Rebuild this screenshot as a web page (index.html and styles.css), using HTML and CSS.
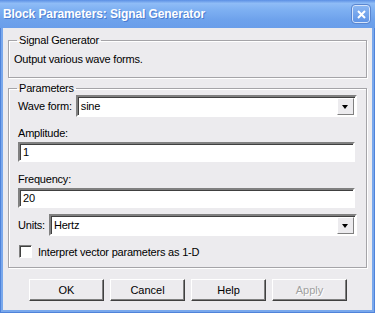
FILE: index.html
```html
<!DOCTYPE html>
<html lang="en">
<head>
    <meta charset="UTF-8">
    <title>Block Parameters: Signal Generator</title>
    <link rel="stylesheet" href="styles.css">
</head>
<body>

<div class="window">
    <!-- title bar -->
    <div class="titlebar">
        <span class="title">Block Parameters: Signal Generator</span>
        <span class="close-btn">
            <svg width="9" height="9" viewBox="0 0 9 9">
                <path d="M1 1 L8 8 M8 1 L1 8" stroke="#fff" stroke-width="2"/>
            </svg>
        </span>
    </div>

    <div class="client">
        <fieldset class="group desc">
            <legend>Signal Generator</legend>
            <p>Output various wave forms.</p>
        </fieldset>

        <fieldset class="group params">
            <legend>Parameters</legend>

            <div class="row first">
                <label>Wave form:</label>
                <div class="select">
                    <span class="value">sine</span>
                    <span class="arrow"></span>
                </div>
            </div>

            <label class="field-label amp">Amplitude:</label>
            <div class="textbox">1</div>

            <label class="field-label freq">Frequency:</label>
            <div class="textbox">20</div>

            <div class="row units">
                <label>Units:</label>
                <div class="select">
                    <span class="value">Hertz</span>
                    <span class="arrow"></span>
                </div>
            </div>

            <div class="check-row">
                <span class="checkbox"></span>
                <span>Interpret vector parameters as 1-D</span>
            </div>
        </fieldset>

        <div class="buttons">
            <button>OK</button>
            <button>Cancel</button>
            <button>Help</button>
            <button class="disabled">Apply</button>
        </div>
    </div>
</div>

</body>
</html>
```

FILE: styles.css
```css
body {
    margin: 0;
    padding: 0;
    font-family: 'Liberation Sans', Arial, sans-serif;
    font-size: 11px;
    letter-spacing: -0.2px;
    color: #000;
    background: #fff;
}

.window {
    width: 375px;
    height: 313px;
    box-sizing: border-box;
    display: flex;
    flex-direction: column;
    background: #79a8ec;
    border: 1px solid #4f83da;
    border-top: none;
}

.titlebar {
    height: 28px;
    flex-shrink: 0;
    display: flex;
    align-items: center;
    justify-content: space-between;
    padding: 0 5px 0 3px;
    background: linear-gradient(to bottom, #5b8fe4 0%, #8fbcf6 12%, #7eb0f2 35%, #6ea2ec 70%, #6a9eea 100%);
    margin: 0 -1px;
}

.title {
    color: #fff;
    font-family: 'Liberation Sans', Arial, sans-serif;
    font-weight: bold;
    font-size: 12px;
    letter-spacing: -0.1px;
    text-shadow: 1px 1px 0 #4a7cd0;
}

.close-btn {
    width: 18px;
    height: 18px;
    box-sizing: border-box;
    border: 1px solid #d6e4fa;
    outline: 1px solid #5a86d0;
    border-radius: 3px;
    background: linear-gradient(to bottom, #8ab6f2, #5f94e6);
    display: flex;
    align-items: center;
    justify-content: center;
}

.client {
    flex: 1;
    margin: 0 2px 2px 2px;
    background: #ecebee;
    padding: 0 5px;
    display: flex;
    flex-direction: column;
}

.group {
    margin: 0;
    border: 1px solid #a5a4a8;
    box-shadow: 1px 1px 0 #fff, inset 1px 1px 0 #fff;
    padding: 0 9px;
    min-width: 0;
}

.group legend {
    padding: 0 2px;
    margin-left: -1px;
}

.desc {
    margin-top: 6px;
    height: 44px;
    box-sizing: border-box;
}

.desc p {
    margin: 7px 0 0 -4px;
}

.params {
    margin-top: 4px;
    height: 186px;
    box-sizing: border-box;
}

.row {
    display: flex;
    align-items: center;
    gap: 4px;
}

.row.first {
    margin-top: 1px;
}

.row label {
    white-space: nowrap;
}

.select {
    flex: 1;
    height: 22px;
    box-sizing: border-box;
    border: 2px solid;
    border-color: #808080 #fff #fff #808080;
    box-shadow: inset 1px 1px 0 #404040;
    background: #fff;
    display: flex;
    align-items: center;
    justify-content: space-between;
    padding: 0 1px 0 3px;
}

.arrow {
    width: 17px;
    height: 17px;
    box-sizing: border-box;
    background: #ecebee;
    border: 1px solid;
    border-color: #fff #808080 #808080 #fff;
    position: relative;
}

.arrow::after {
    content: '';
    position: absolute;
    left: 4px;
    top: 6px;
    border-left: 3.5px solid transparent;
    border-right: 3.5px solid transparent;
    border-top: 4px solid #000;
}

.field-label {
    display: block;
    height: 15px;
}

.field-label.amp {
    margin-top: 10px;
}

.field-label.freq {
    margin-top: 11px;
}

.textbox {
    height: 20px;
    box-sizing: border-box;
    border: 2px solid;
    border-color: #808080 #fff #fff #808080;
    box-shadow: inset 1px 1px 0 #404040;
    background: #fff;
    padding: 2px 3px;
    margin-right: 2px;
}

.row.units {
    margin-top: 6px;
}

.check-row {
    display: flex;
    align-items: center;
    gap: 6px;
    margin-top: 9px;
    padding-left: 1px;
}

.checkbox {
    width: 13px;
    height: 13px;
    box-sizing: border-box;
    border: 1px solid;
    border-color: #808080 #fff #fff #808080;
    box-shadow: inset 1px 1px 0 #404040;
    background: #fff;
}

.buttons {
    display: flex;
    gap: 6px;
    padding-left: 21px;
    margin-top: 11px;
}

.buttons button {
    width: 75px;
    height: 22px;
    font-family: inherit;
    font-size: 11px;
    background: #ecebee;
    border: 1px solid;
    border-color: #fff #404040 #404040 #fff;
    box-shadow: inset -1px -1px 0 #808080;
    padding: 0;
    color: #000;
}

.buttons button.disabled {
    color: #a0a0a0;
    text-shadow: 1px 1px 0 #fff;
}
```
